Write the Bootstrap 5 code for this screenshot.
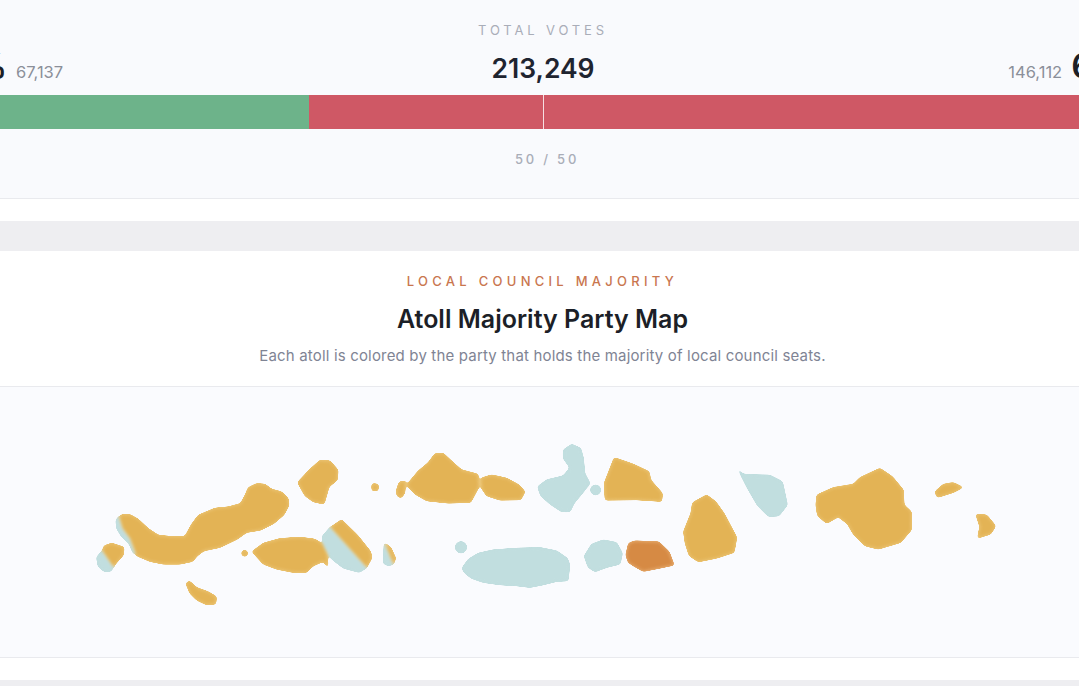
<!DOCTYPE html>
<html lang="en">
<head>
<meta charset="utf-8">
<title>Atoll Majority Party Map</title>
<link href="https://cdn.jsdelivr.net/npm/bootstrap@5.3.0/dist/css/bootstrap.min.css" rel="stylesheet">
<style>
html,body{height:686px;overflow:hidden}
body{background:#eeeef1;font-family:Inter,"Liberation Sans",sans-serif;color:#1f2430}
.sheet{background:#fff}
.votes-panel{height:199px;background:#f9fafd;border-bottom:1px solid #e9eaee;overflow:hidden}
.sheet-foot{height:22px}
.votes-wide{width:1268px;margin-left:-91px;padding-top:23px}
.votes-row{display:grid;grid-template-columns:1fr auto 1fr;height:57px}
.eyebrow-total{font-size:13px;line-height:15px;letter-spacing:3.85px;color:#a9adb8}
.total-num{font-size:26.5px;line-height:30px;font-weight:600;margin-top:15px;color:#1f2430}
.side-val{font-size:34px;line-height:38px;font-weight:600;color:#1c1f27}
.side-sub{font-size:16.5px;color:#8b8f99}
.side-left{margin-left:-4px;gap:9px;padding-top:9px}
.side-right{margin-right:-3px;gap:9px;padding-top:9px}
.vote-bar{height:34px;border-radius:0;background:#cf5865;position:relative}
.bar-green{background:#6db38a}
.bar-red{background:#cf5865}
.bar-mid{position:absolute;left:50%;top:0;bottom:0;width:1px;background:#f6dfe2}
.split-note{font-size:13px;line-height:15px;font-weight:500;letter-spacing:2.8px;color:#a9adb8;margin-top:23px;padding-left:8px}
.band{height:30px}
.map-head{height:136px;padding:23px 0 0 6px;border-bottom:1px solid #e9eaee}
.map-kicker{font-size:13px;line-height:15px;font-weight:500;letter-spacing:4.27px;color:#c9764f}
.map-title{font-size:25px;line-height:30px;font-weight:600;margin:15px 0 0;color:#1c1f27}
.map-sub{font-size:15px;line-height:18px;letter-spacing:.17px;color:#7f8494;margin:13px 0 0}
.map-area{height:271px;background:#fafbfe;border-bottom:1px solid #e9eaee}
.map-area svg{display:block;width:1079px;height:270px}
.g{fill:#e3b355;stroke:#f0cf88;stroke-width:3;stroke-linejoin:round}
.t{fill:#c1dedf;stroke:#c1dedf;stroke-width:3;stroke-linejoin:round}
.o{fill:#d68a44;stroke:#eebf87;stroke-width:3;stroke-linejoin:round}
</style>
</head>
<body>
<div class="sheet">
  <div class="votes-panel">
    <div class="votes-wide text-center">
      <div class="eyebrow-total">TOTAL VOTES</div>
      <div class="votes-row">
        <div class="side-left d-flex align-items-baseline justify-content-start">
          <span class="side-val">31.5%</span><span class="side-sub">67,137</span>
        </div>
        <div class="total-num">213,249</div>
        <div class="side-right d-flex align-items-baseline justify-content-end">
          <span class="side-sub">146,112</span><span class="side-val">68.5%</span>
        </div>
      </div>
      <div class="progress vote-bar">
        <div class="progress-bar bar-green" style="width:31.55%"></div>
        <div class="progress-bar bar-red" style="width:68.45%"></div>
        <div class="bar-mid"></div>
      </div>
      <div class="split-note">50 / 50</div>
    </div>
  </div>
  <div class="sheet-foot"></div>
</div>
<div class="band"></div>
<div class="sheet">
  <div class="map-head text-center">
    <div class="map-kicker">LOCAL COUNCIL MAJORITY</div>
    <h2 class="map-title">Atoll Majority Party Map</h2>
    <p class="map-sub">Each atoll is colored by the party that holds the majority of local council seats.</p>
  </div>
  <div class="map-area">
    <svg viewBox="0 387 1079 270" role="img" aria-label="Map of atolls colored by majority party">
      <defs>
        <filter id="soften" filterUnits="userSpaceOnUse" x="0" y="387" width="1079" height="270" color-interpolation-filters="sRGB">
          <feGaussianBlur stdDeviation="1.5"/>
          <feColorMatrix type="matrix" values="1 0 0 0 0 0 1 0 0 0 0 0 1 0 0 0 0 0 9 -3.6"/>
        </filter>
      </defs>
      <g filter="url(#soften)">
      <g transform="translate(80 440) scale(.3333)">
        <polygon class="t" points="108,240 118,228 175,340 160,340 148,312 125,290 110,265"/>
        <polygon class="g" points="118,232 125,224 150,224 175,238 205,266 235,286 275,290 315,290 335,253 355,226 405,205 445,201 482,191 497,163 505,143 530,131 555,133 575,148 605,156 624,175 627,195 612,224 582,250 542,270 500,277 472,297 420,322 372,332 352,347 338,364 300,372 250,372 210,364 170,347 150,295 128,265"/>
        <polygon class="t" points="50,352 68,331 105,375 92,394 72,394 55,380"/>
        <polygon class="g" points="68,333 72,318 95,310 132,322 130,345 108,370 100,380"/>
        <polygon class="g" points="653,127 690,88 720,61 750,63 774,90 772,120 747,140 732,192 700,185 675,167"/>
        <polygon class="g" points="876,131 895,133 894,152 876,152"/>
        <polygon class="g" points="950,150 958,126 977,123 974,160 963,174 951,167"/>
        <circle class="g" cx="494" cy="340" r="9"/>
        <polygon class="g" points="516,335 550,310 600,296 660,292 705,298 732,315 742,345 744,382 730,364 700,377 680,397 640,397 590,387 550,372"/>
        <polygon class="t" points="726,290 752,260 862,382 838,397 790,384 755,357 733,320"/>
        <polygon class="g" points="752,262 785,239 832,285 872,335 875,355 860,382"/>
        <polygon class="t" points="913,310 942,372 925,377 910,370"/>
        <polygon class="g" points="915,310 932,322 947,355 940,372"/>
        <polygon class="g" points="318,430 328,423 350,443 385,456 409,470 407,492 380,494 350,480 330,460"/>
      </g>
      <g transform="translate(360 430) scale(.3333)">
        <polygon class="g" points="140,165 175,123 205,98 225,71 250,70 280,98 305,120 354,133 357,170 332,217 265,219 200,212 165,192"/>
        <polygon class="g" points="363,145 395,135 440,145 477,165 495,185 482,209 420,210 380,197 365,175"/>
        <polygon class="t" points="533,170 560,150 610,138 630,113 610,85 610,60 635,43 662,55 670,85 674,130 690,160 667,190 642,220 630,245 605,245 570,222 543,198"/>
        <circle class="t" cx="707" cy="180" r="15"/>
        <polygon class="g" points="733,160 763,83 820,103 867,125 872,150 907,190 905,214 830,209 736,210"/>
        <circle class="t" cx="303" cy="352" r="17"/>
        <polygon class="t" points="306,415 325,388 355,370 400,360 470,355 540,353 590,363 622,385 629,405 624,452 590,454 550,464 510,472 470,467 420,464 370,457 335,445 315,430"/>
        <polygon class="t" points="673,378 695,343 730,330 770,338 787,370 780,402 740,412 705,425 685,412"/>
        <polygon class="o" points="798,375 806,340 825,333 897,336 927,365 942,405 900,414 850,424 820,407 805,397"/>
      </g>
      <g transform="translate(670 450) scale(.3333)">
        <polygon class="g" points="41,245 63,190 68,158 110,135 137,155 162,190 200,262 192,307 140,324 85,335 58,317 46,280"/>
        <polygon class="t" points="203,56 220,73 300,76 337,95 352,165 327,197 295,199 263,167 233,115"/>
        <polygon class="g" points="441,135 490,113 550,103 570,83 630,55 667,80 700,120 702,165 724,185 724,240 692,277 625,297 585,287 550,252 533,222 505,200 470,220 443,197 438,165"/>
        <polygon class="g" points="795,125 820,103 850,98 879,112 850,127 802,142"/>
        <polygon class="g" points="918,193 950,195 977,228 962,252 923,264 930,230"/>
      </g>
      </g>
    </svg>
  </div>
  <div class="sheet-foot"></div>
</div>
<script src="https://cdn.jsdelivr.net/npm/bootstrap@5.3.0/dist/js/bootstrap.bundle.min.js"></script>
</body>
</html>
